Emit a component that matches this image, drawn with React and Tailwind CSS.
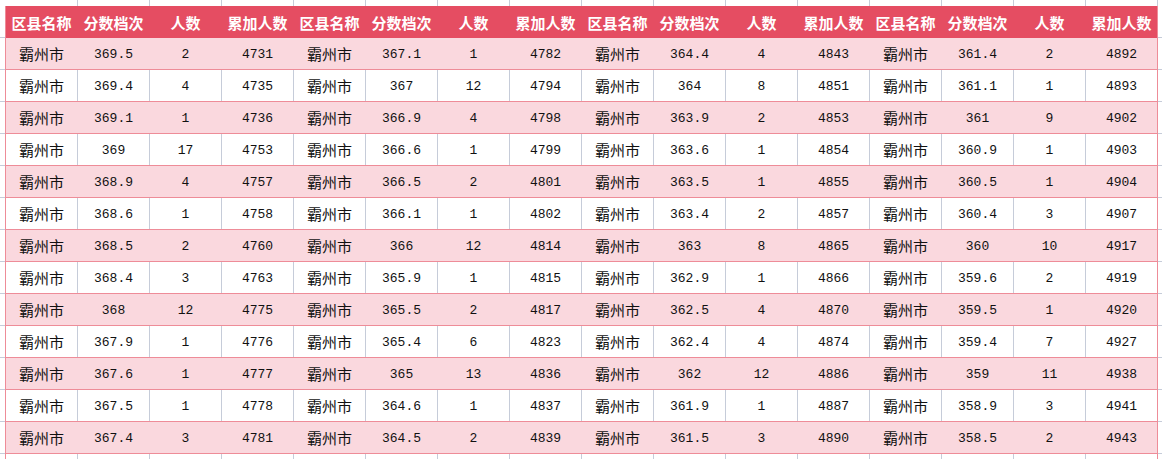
import React from 'react';

const groups = [
    [
        ['369.5', 2, 4731], ['369.4', 4, 4735], ['369.1', 1, 4736], ['369', 17, 4753],
        ['368.9', 4, 4757], ['368.6', 1, 4758], ['368.5', 2, 4760], ['368.4', 3, 4763],
        ['368', 12, 4775], ['367.9', 1, 4776], ['367.6', 1, 4777], ['367.5', 1, 4778],
        ['367.4', 3, 4781],
    ],
    [
        ['367.1', 1, 4782], ['367', 12, 4794], ['366.9', 4, 4798], ['366.6', 1, 4799],
        ['366.5', 2, 4801], ['366.1', 1, 4802], ['366', 12, 4814], ['365.9', 1, 4815],
        ['365.5', 2, 4817], ['365.4', 6, 4823], ['365', 13, 4836], ['364.6', 1, 4837],
        ['364.5', 2, 4839],
    ],
    [
        ['364.4', 4, 4843], ['364', 8, 4851], ['363.9', 2, 4853], ['363.6', 1, 4854],
        ['363.5', 1, 4855], ['363.4', 2, 4857], ['363', 8, 4865], ['362.9', 1, 4866],
        ['362.5', 4, 4870], ['362.4', 4, 4874], ['362', 12, 4886], ['361.9', 1, 4887],
        ['361.5', 3, 4890],
    ],
    [
        ['361.4', 2, 4892], ['361.1', 1, 4893], ['361', 9, 4902], ['360.9', 1, 4903],
        ['360.5', 1, 4904], ['360.4', 3, 4907], ['360', 10, 4917], ['359.6', 2, 4919],
        ['359.5', 1, 4920], ['359.4', 7, 4927], ['359', 11, 4938], ['358.9', 3, 4941],
        ['358.5', 2, 4943],
    ],
];

const headers = ['区县名称', '分数档次', '人数', '累加人数'];
const cjk = { fontFamily: '"Noto Sans CJK SC", sans-serif' };
const mono = { fontFamily: '"Liberation Mono", "Noto Sans CJK SC", monospace' };

const rows = groups[0].map((_, i) =>
    groups.flatMap((g) => ['霸州市', g[i][0], String(g[i][1]), String(g[i][2])])
);

const Cell = ({ children, pink, last, idx }) => (
    <div
        className={`w-[72px] h-full shrink-0 flex items-center justify-center pt-[2px] border-r ${
            last ? 'border-[#ee8c98]' : pink ? 'border-[#fad8de]' : 'border-[#c6ccd9]'
        } ${idx % 4 === 0 ? 'text-[15px]' : 'text-[13px]'}`}
        style={idx % 4 === 0 ? cjk : mono}
    >
        {children}
    </div>
);

const App = () => {
    return (
        <div className="w-[1162px] h-[459px] overflow-hidden bg-white flex text-[#111]">
            {/* left margin gridlines */}
            <div className="w-[5px] shrink-0 flex flex-col">
                <div className="h-[6px] shrink-0" />
                {Array.from({ length: 15 }).map((_, i) => (
                    <div key={i} className="h-[32px] shrink-0 border-b border-[#c6ccd9]" />
                ))}
            </div>

            <div className="flex flex-col shrink-0">
                {/* top margin gridlines */}
                <div className="h-[6px] shrink-0 flex border-l border-white">
                    {Array.from({ length: 16 }).map((_, i) => (
                        <div key={i} className="w-[72px] h-full shrink-0 border-r border-[#c6ccd9]" />
                    ))}
                </div>

                {/* Table */}
                <div className="flex flex-col border-l border-[#ee8c98]">
                    <div className="h-[32px] flex bg-[#e54d62] text-white font-bold text-[15px]" style={cjk}>
                        {Array.from({ length: 16 }).map((_, i) => (
                            <div
                                key={i}
                                className={`w-[72px] h-full shrink-0 flex items-center justify-center pt-[3px] border-r ${
                                    i === 15 ? 'border-[#ee8c98]' : 'border-[#e54d62]'
                                }`}
                            >
                                {headers[i % 4]}
                            </div>
                        ))}
                    </div>
                    {rows.map((row, r) => {
                        const pink = r % 2 === 0;
                        return (
                            <div
                                key={r}
                                className={`h-[32px] flex border-b border-[#ee8c98] ${pink ? 'bg-[#fad8de]' : 'bg-white'}`}
                            >
                                {row.map((v, i) => (
                                    <Cell key={i} idx={i} pink={pink} last={i === 15}>
                                        {v}
                                    </Cell>
                                ))}
                            </div>
                        );
                    })}
                    <div className="h-[32px] flex bg-white">
                        {Array.from({ length: 16 }).map((_, i) => (
                            <Cell key={i} idx={1} last={i === 15} />
                        ))}
                    </div>
                </div>
            </div>

            {/* right margin gridlines */}
            <div className="flex-1 flex flex-col">
                <div className="h-[6px] shrink-0" />
                {Array.from({ length: 15 }).map((_, i) => (
                    <div key={i} className="h-[32px] shrink-0 border-b border-[#c6ccd9]" />
                ))}
            </div>
        </div>
    );
};

export default App;
